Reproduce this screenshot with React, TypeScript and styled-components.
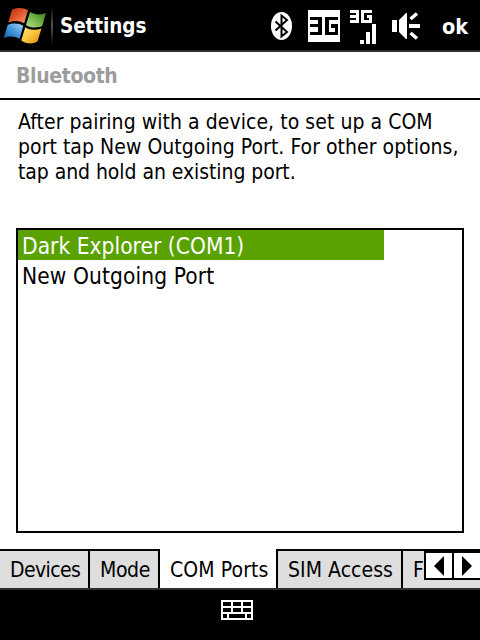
import React from 'react';
import styled, { createGlobalStyle } from 'styled-components';

const Global = createGlobalStyle`
  * { box-sizing: border-box; }
  body { margin: 0; background: #fff; }
`;

const Screen = styled.div`
  width: 480px;
  height: 640px;
  display: flex;
  flex-direction: column;
  overflow: hidden;
  background: #fff;
  color: #000;
  font: 21px 'DejaVu Sans Condensed', 'DejaVu Sans', sans-serif;
  font-stretch: condensed;
  white-space: nowrap;
`;

const TitleBar = styled.header`
  height: 52px;
  flex: none;
  display: flex;
  background: #000;
  border-bottom: 2px solid #2e2e2e;
  color: #fff;
  font-weight: bold;
  line-height: 52px;
`;

const Divider = styled.i`
  width: 2px;
  height: 38px;
  margin: 7px 7px 0 2px;
  background: linear-gradient(#000, #555 50%, #000);
`;

const Title = styled.h1`
  flex: 1;
  margin: 0;
  font-size: 20.5px;
  line-height: 52px;
  letter-spacing: -0.1px;
`;

const OkButton = styled.span`
  width: 38px;
  font-size: 21.5px;
  line-height: 54px;
`;

const Heading = styled.h2`
  height: 48px;
  flex: none;
  margin: 0;
  padding-left: 16px;
  border-bottom: 2px solid #000;
  color: #9c9c9c;
  font-size: 21px;
  line-height: 48px;
  letter-spacing: -0.35px;
`;

const Hint = styled.p`
  height: 128px;
  flex: none;
  margin: 0;
  padding: 10px 0 0 18px;
  line-height: 25px;
`;

const HintLine = styled.span<{ $tracking: number }>`
  display: block;
  letter-spacing: ${(p) => p.$tracking}px;
`;

const PortList = styled.ul`
  height: 305px;
  flex: none;
  margin: 0 16px;
  padding: 0;
  border: 2px solid #000;
  list-style: none;
`;

const Port = styled.li<{ $selected?: boolean; $tracking: number }>`
  width: 366px;
  height: 30px;
  padding-left: 4px;
  font-size: 22.5px;
  line-height: 32px;
  letter-spacing: ${(p) => p.$tracking}px;
  color: ${(p) => (p.$selected ? '#fff' : '#000')};
  background: ${(p) => (p.$selected ? '#5aa200' : 'transparent')};
`;

const TabStrip = styled.nav`
  position: relative;
  height: 39px;
  flex: none;
  display: flex;
  margin-top: 16px;
`;

const Tab = styled.span<{ $width: number; $active?: boolean; $tracking?: number }>`
  width: ${(p) => p.$width}px;
  flex: none;
  padding-left: 10px;
  border-top: 2px solid ${(p) => (p.$active ? '#fff' : '#000')};
  border-right: ${(p) => (p.$active ? 0 : 2)}px solid #000;
  background: ${(p) => (p.$active ? '#fff' : '#dedede')};
  line-height: 39px;
  letter-spacing: ${(p) => p.$tracking ?? 0}px;

  ${(p) => p.$active && '& + span { border-left: 2px solid #000; }'}
`;

const Scroller = styled.div`
  position: absolute;
  top: 2px;
  right: 0;
  display: flex;
  width: 56px;
  height: 29px;
  border: solid #000;
  border-width: 2px 0 2px 2px;
  background: #fff;
`;

const ScrollButton = styled.span<{ $divided?: boolean }>`
  width: ${(p) => (p.$divided ? 28 : 26)}px;
  border-right: ${(p) => (p.$divided ? 2 : 0)}px solid #000;
  padding: 3px 0 0 8px;
  line-height: 0;
`;

const CommandBar = styled.footer`
  flex: 1;
  display: flex;
  justify-content: center;
  padding: 10px 6px 0 0;
  background: #000;
  border-top: 2px solid #2e2e2e;
`;

const WindowsLogo = () => (
  <svg width="49" height="50" viewBox="0 0 49 50">
    <defs>
      <linearGradient id="red" x1="0" y1="0" x2="1" y2="1">
        <stop offset="0" stopColor="#a92d0d" />
        <stop offset=".5" stopColor="#e2592b" />
        <stop offset="1" stopColor="#f8a071" />
      </linearGradient>
      <linearGradient id="green" x1="0" y1="1" x2="1" y2="0">
        <stop offset="0" stopColor="#b9e090" />
        <stop offset=".5" stopColor="#74b544" />
        <stop offset="1" stopColor="#327a19" />
      </linearGradient>
      <linearGradient id="blue" x1="1" y1="0" x2="0" y2="1">
        <stop offset="0" stopColor="#a5d6f5" />
        <stop offset=".5" stopColor="#4196d9" />
        <stop offset="1" stopColor="#155cac" />
      </linearGradient>
      <linearGradient id="yellow" x1="0" y1="0" x2="1" y2="1">
        <stop offset="0" stopColor="#ffe58b" />
        <stop offset=".5" stopColor="#fcc43c" />
        <stop offset="1" stopColor="#d28b0a" />
      </linearGradient>
    </defs>
    <path fill="url(#red)" d="M12 9.7C17 7.4 23 7.5 28 10.3L24.2 23.2C19 20.4 13.5 20.3 8.3 22.6Z" />
    <path fill="url(#green)" d="M30 12C35 14.9 40.5 15.2 46 13.1L42.2 26C37 28.2 31 28 26 24.900Z" />
    <path fill="url(#blue)" d="M7.7 25C12.5 22.9 18.5 23 23.3 25.8L19.6 38.7C14.5 36 9 36 3.8 37.9Z" />
    <path fill="url(#yellow)" d="M25.3 27.2C30 30.2 36 30.5 41.4 28.6L37.5 41.6C32.5 44.5 26 43.9 21.2 40.5Z" />
  </svg>
);

/* Bluetooth, 3G connection, signal strength and volume */
const StatusIcons = () => (
  <svg width="172" height="50" viewBox="270 0 172 50" fill="#fff">
    <ellipse cx="281.5" cy="26" rx="10.5" ry="14" />
    <path
      fill="none"
      stroke="#000"
      strokeWidth="2"
      d="M275.500 21.500L287 32L281.500 36.500V15.500L287 20L275.500 30.500"
    />
    <path d="M308 10h32v32h-32z" />
    <path
      fill="#000"
      d="M310 17h12v18h-12v-3h8v-5h-8v-3h8v-4h-8zM325 17h13v3h-9v12h6v-4h-4v-4h7v11h-13z"
    />
    <path d="M350 10h9v13h-9v-3h6v-2h-6v-3h6v-2h-6zM361 10h11v3h-8v7h5v-2h-2v-3h5v8h-11z" />
    <path d="M360 40h4v4h-4zM366 32h4v12h-4zM372 24h4v20h-4z" />
    <path d="M392 20h5v12h-5zM399 20L406 13h1v26h-1L399 32zM409 24h11v4h-11z" />
    <path stroke="#fff" strokeWidth="3.6" d="M410.5 19L417 13.5M410.5 33L417 38.5" />
  </svg>
);

const KeyboardIcon = () => (
  <svg width="32" height="20" viewBox="0 0 32 20" shapeRendering="crispEdges">
    <path fill="#fff" d="M0 0h32v20H0z" />
    <path
      d="M2 2h8v4H2zM12 2h8v4h-8zM22 2h8v4h-8zM2 8h8v4H2zM12 8h8v4h-8zM22 8h8v4h-8zM2 14h4v4H2zM8 14h16v4H8zM26 14h4v4h-4z"
    />
  </svg>
);

export default function App() {
  return (
    <Screen>
      <Global />
      <TitleBar>
        <WindowsLogo />
        <Divider />
        <Title>Settings</Title>
        <StatusIcons />
        <OkButton>ok</OkButton>
      </TitleBar>
      <Heading>Bluetooth</Heading>
      <Hint>
        <HintLine $tracking={0.05}>After pairing with a device, to set up a COM</HintLine>
        <HintLine $tracking={0.04}>port tap New Outgoing Port. For other options,</HintLine>
        <HintLine $tracking={-0.07}>tap and hold an existing port.</HintLine>
      </Hint>
      <PortList>
        <Port $selected $tracking={0.05}>Dark Explorer (COM1)</Port>
        <Port $tracking={0.12}>New Outgoing Port</Port>
      </PortList>
      <TabStrip>
        <Tab $width={90} $tracking={-0.6}>Devices</Tab>
        <Tab $width={70} $tracking={-0.4}>Mode</Tab>
        <Tab $width={116} $active $tracking={0.1}>COM Ports</Tab>
        <Tab $width={127} $tracking={0.05}>SIM Access</Tab>
        <Tab $width={90}>F</Tab>
        <Scroller>
          <ScrollButton $divided>
            <svg width="10" height="20"><path d="M10 0V20L0 10Z" /></svg>
          </ScrollButton>
          <ScrollButton>
            <svg width="10" height="20"><path d="M0 0V20L10 10Z" /></svg>
          </ScrollButton>
        </Scroller>
      </TabStrip>
      <CommandBar>
        <KeyboardIcon />
      </CommandBar>
    </Screen>
  );
}
